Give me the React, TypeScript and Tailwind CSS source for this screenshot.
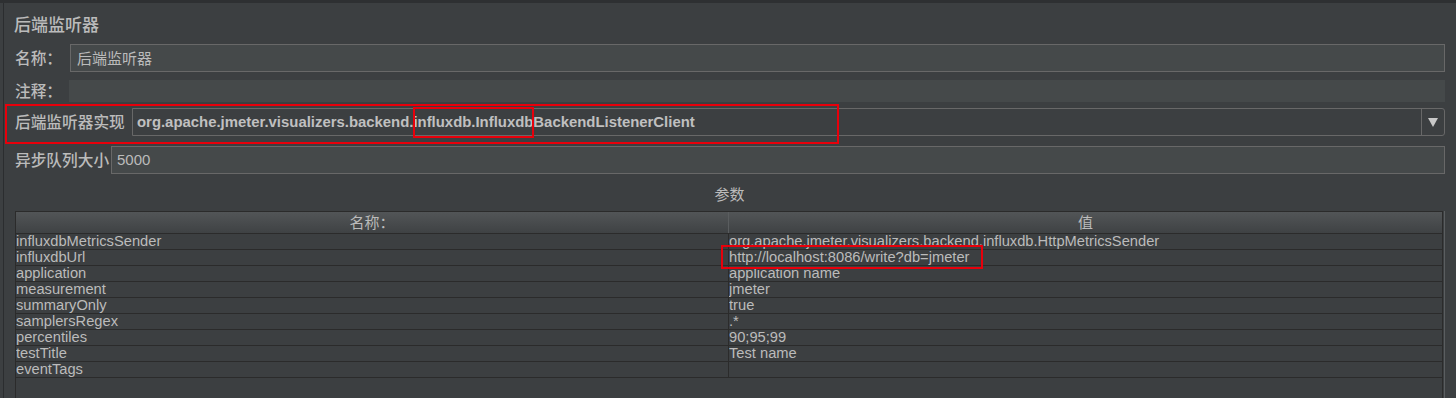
const params: [string, string][] = [
  ['influxdbMetricsSender', 'org.apache.jmeter.visualizers.backend.influxdb.HttpMetricsSender'],
  ['influxdbUrl', 'http://localhost:8086/write?db=jmeter'],
  ['application', 'application name'],
  ['measurement', 'jmeter'],
  ['summaryOnly', 'true'],
  ['samplersRegex', '.*'],
  ['percentiles', '90;95;99'],
  ['testTitle', 'Test name'],
  ['eventTags', ''],
]

export default function App() {
  return (
    <div className="relative w-[1456px] h-[398px] overflow-hidden bg-[#3c3f41] border-t-[3px] border-[#2e3032] pl-[3px] font-['Liberation_Sans','Noto_Sans_CJK_SC',sans-serif] text-[#bbbbbb]">
      <div className="h-full border-l border-[#2b2d2f] pl-[10px] pr-[11px] flex flex-col">
        {/* Title */}
        <div className="pt-[11px] h-[31px] text-[17px] leading-[20px] font-medium font-['Noto_Sans_CJK_SC',sans-serif]">
          后端监听器
        </div>

        {/* Name */}
        <div className="mt-[10px] flex items-center h-[28px]">
          <label className="w-[56px] pl-[1px] text-[15.7px] font-medium font-['Noto_Sans_CJK_SC',sans-serif]">名称：</label>
          <div className="flex-1 h-full bg-[#45494a] border border-[#686868] flex items-center pl-[6px] text-[15px] font-['Noto_Sans_CJK_SC',sans-serif]">
            后端监听器
          </div>
        </div>

        {/* Comment */}
        <div className="mt-[8px] flex items-center h-[22px]">
          <label className="w-[55px] pl-[1px] text-[15.7px] font-medium font-['Noto_Sans_CJK_SC',sans-serif]">注释：</label>
          <div className="flex-1 h-full bg-[#45494a]" />
        </div>

        {/* Implementation */}
        <div className="mt-[6px] flex items-center h-[28px]">
          <label className="w-[118px] pl-[1px] text-[15.7px] font-medium font-['Noto_Sans_CJK_SC',sans-serif] whitespace-nowrap">后端监听器实现</label>
          <div className="flex-1 h-full flex border border-[#686868] rounded-r-[3px]">
            <div className="flex-1 flex items-center pl-[4px] text-[14.9px] font-bold text-[#c0c0c0]">
              org.apache.jmeter.visualizers.backend.influxdb.InfluxdbBackendListenerClient
            </div>
            <div className="w-[23px] border-l border-[#686868] flex items-center justify-center">
              <svg width="10" height="9" viewBox="0 0 10 9">
                <path d="M0 0h10L5 9z" fill="#c8c8c8" />
              </svg>
            </div>
          </div>
        </div>

        {/* Queue size */}
        <div className="mt-[10px] flex items-center h-[28px]">
          <label className="w-[97px] pl-[1px] text-[15.7px] font-medium font-['Noto_Sans_CJK_SC',sans-serif] whitespace-nowrap">异步队列大小</label>
          <div className="flex-1 h-full bg-[#45494a] border border-[#686868] flex items-center pl-[5px] text-[15px]">
            5000
          </div>
        </div>

        {/* Params caption */}
        <div className="mt-[10px] h-[20px] leading-[20px] text-center text-[15px] font-['Noto_Sans_CJK_SC',sans-serif]">
          参数
        </div>

        {/* Table */}
        <div className="mt-[7px] ml-[1px] flex-1 border-r border-[#5b5e60]">
          <div className="h-full mr-[1px] border-l border-t border-r border-[#2b2b2b] flex flex-col">
            <div className="h-[22px] flex border-b border-[#2b2b2b] bg-gradient-to-b from-[#525557] to-[#3f4244] text-[15px] font-['Noto_Sans_CJK_SC',sans-serif]">
              <div className="w-[713px] border-r border-[#5a5d5f] flex items-center justify-center">名称：</div>
              <div className="flex-1 flex items-center justify-center">值</div>
            </div>
            {params.map(([name, value]) => (
              <div key={name} className="h-[16px] flex border-b border-[#2b2b2b] text-[14.7px] leading-[15px]">
                <div className="w-[713px] border-r border-[#2b2b2b] whitespace-nowrap overflow-hidden">{name}</div>
                <div className="flex-1 whitespace-nowrap overflow-hidden">{value}</div>
              </div>
            ))}
          </div>
        </div>
      </div>

      {/* Annotation boxes */}
      <div className="absolute left-[5px] top-[101px] w-[834px] h-[40px] border-2 border-[#e8000b]" />
      <div className="absolute left-[413px] top-[104px] w-[121px] h-[31px] border-2 border-[#e8000b]" />
      <div className="absolute left-[721px] top-[242px] w-[262px] h-[24px] border-2 border-[#e8000b]" />
    </div>
  )
}
